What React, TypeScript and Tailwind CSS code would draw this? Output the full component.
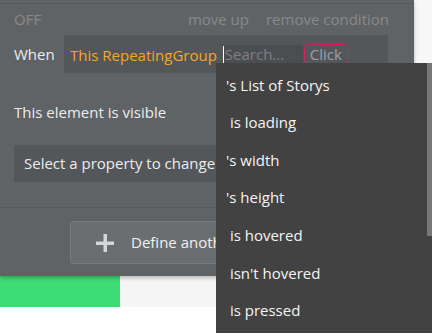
import React from "react";

const items = ["'s List of Storys", " is loading", "'s width", "'s height", " is hovered", " isn't hovered", " is pressed"];

export default function App() {
  return (
    <div className="relative w-[432px] h-[336px] overflow-hidden bg-white" style={{ fontFamily: '"Open Sans", "Noto Sans", sans-serif' }}>
      <div className="flex">
        <div className="w-[414px] bg-[#5f6366] relative z-10 shadow-[0_2px_4px_rgba(0,0,0,0.25)]">
          <div className="h-[3px] bg-[#5f6366]" />
          <div className="border-t border-[#55595c]">
            <div className="flex items-center h-[31px] pl-[14px] text-[15px] text-[#868a8d]">
              <span>OFF</span>
              <span className="ml-auto">move up</span>
              <span className="ml-[17px] mr-[25px]">remove condition</span>
            </div>
            <div className="flex items-center h-[38px] pl-[14px]">
              <span className="text-[15px] text-[#ececec] w-[50px]">When</span>
              <div className="flex items-end w-[324px] h-[38px] bg-[#53575a] pl-[6px] pb-[9px]">
                <span className="text-[15px] text-[#f5a623] leading-[20px] mb-[-1px]">This RepeatingGroup</span>
                <div className="ml-[6px] w-[80px] h-[19px] bg-[#4b4e51] rounded-t-[3px] flex items-center">
                  <span className="w-px h-[18px] bg-white" />
                  <span className="text-[15px] text-[#7d8184] ml-[1px] leading-none">Search...</span>
                </div>
                <div className="ml-[1px] w-[44px] h-[20px] border border-[#d3205a] rounded-[4px] flex items-center justify-center text-[15px] text-[#9aa0a6] leading-none">Click</div>
              </div>
            </div>
            <div className="h-[72px] flex items-center pl-[14px] pt-[7px] text-[15px] text-[#ececec]">This element is visible</div>
            <div className="pl-[14px]">
              <div className="w-[300px] h-[37px] bg-[#53575a] flex items-center pl-[10px] text-[15px] text-[#ececec]">Select a property to change</div>
            </div>
            <div className="h-[25px]" />
            <div className="border-t border-[#575b5e] pt-[13px] pb-[12px] pl-[70px]">
              <div className="w-[300px] h-[43px] bg-[#6a6e71] border border-[#777b7e] rounded-[3px] flex items-center pl-[25px] overflow-hidden">
                <svg width="18" height="18" viewBox="0 0 18 18"><rect x="7.5" y="0" width="3.5" height="18" fill="#d4d6d7" /><rect x="0" y="7.5" width="18" height="3.5" fill="#d4d6d7" /></svg>
                <span className="ml-[17px] text-[15px] text-[#f0f0f0] whitespace-nowrap">Define another condition</span>
              </div>
            </div>
          </div>
        </div>
        <div className="flex-1 bg-[#f7f7f7]" />
      </div>
      <div className="flex h-[31px]">
        <div className="w-[120px] bg-[#3ddc74]" />
        <div className="flex-1 bg-[#f5f5f5]" />
      </div>
      <div className="absolute left-[216px] top-[63px] w-[216px] h-[270px] bg-[#424242] z-20">
        <div className="flex flex-col pt-[3px]">
          {items.map((t) => (
            <div key={t} className="h-[37.6px] flex items-center pl-[10px] text-[15px] text-[#f4f4f4] whitespace-pre">{t}</div>
          ))}
        </div>
        <div className="absolute right-0 top-0 w-[5px] h-[173px] bg-[#777777]" />
      </div>
    </div>
  );
}
